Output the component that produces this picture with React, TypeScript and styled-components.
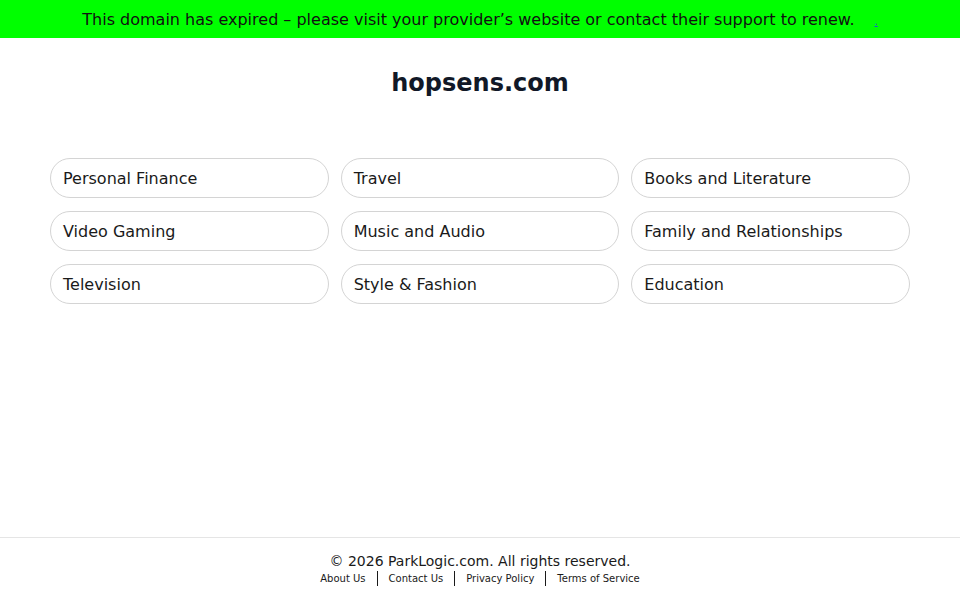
import React from "react";
import { createGlobalStyle, styled } from "styled-components";

const topics = [
  "Personal Finance",
  "Travel",
  "Books and Literature",
  "Video Gaming",
  "Music and Audio",
  "Family and Relationships",
  "Television",
  "Style & Fashion",
  "Education",
];

const footerLinks = ["About Us", "Contact Us", "Privacy Policy", "Terms of Service"];

const App: React.FC = () => {
  return (
    <>
      <GlobalStyle />
      <StyledPage>
        <StyledBanner>
          This domain has expired – please visit your provider’s website or contact their support to renew.
          <StyledBannerLink href="#">.</StyledBannerLink>
        </StyledBanner>
        <StyledMain>
          <StyledTitle>hopsens.com</StyledTitle>
          <StyledGrid>
            {topics.map((topic) => (
              <StyledTopic key={topic} href="#">
                {topic}
              </StyledTopic>
            ))}
          </StyledGrid>
        </StyledMain>
        <StyledFooter>
          <StyledCopyright>© 2026 ParkLogic.com. All rights reserved.</StyledCopyright>
          <StyledFooterLinks>
            {footerLinks.map((link, i) => (
              <React.Fragment key={link}>
                {i > 0 && <StyledDivider />}
                <StyledFooterLink href="#">{link}</StyledFooterLink>
              </React.Fragment>
            ))}
          </StyledFooterLinks>
        </StyledFooter>
      </StyledPage>
    </>
  );
};

const GlobalStyle = createGlobalStyle`
  * { box-sizing: border-box; }
  body {
    margin: 0;
    font-family: "DejaVu Sans", sans-serif;
    background: #fff;
    color: #111;
  }
`;

const StyledPage = styled.div`
  min-height: 100vh;
  display: flex;
  flex-direction: column;
`;

const StyledBanner = styled.div`
  height: 38px;
  background: #00ff00;
  display: flex;
  align-items: center;
  justify-content: center;
  font-size: 16px;
  color: #111;
`;

const StyledBannerLink = styled.a`
  margin-left: 20px;
  font-size: 10px;
  color: #1a56db;
  text-decoration: underline;
  align-self: center;
  padding-top: 4px;
`;

const StyledMain = styled.main`
  flex: 1;
  padding: 30px 50px 0;
`;

const StyledTitle = styled.h1`
  margin: 0;
  text-align: center;
  font-size: 24px;
  font-weight: bold;
  color: #111827;
  line-height: 30px;
`;

const StyledGrid = styled.div`
  display: grid;
  grid-template-columns: repeat(3, 1fr);
  column-gap: 12px;
  row-gap: 13px;
  margin-top: 60px;
`;

const StyledTopic = styled.a`
  display: flex;
  align-items: center;
  height: 40px;
  padding: 0 12px;
  border: 1px solid #d4d4d4;
  border-radius: 20px;
  font-size: 16px;
  color: #1a1a1a;
  text-decoration: none;
`;

const StyledFooter = styled.footer`
  border-top: 1px solid #e5e5e5;
  padding: 15px 0 14px;
  text-align: center;
`;

const StyledCopyright = styled.div`
  font-size: 14px;
  color: #1a1a1a;
  line-height: 17px;
`;

const StyledFooterLinks = styled.div`
  display: flex;
  justify-content: center;
  align-items: center;
  gap: 11px;
  margin-top: 1px;
`;

const StyledFooterLink = styled.a`
  font-size: 10px;
  color: #1a1a1a;
  text-decoration: none;
`;

const StyledDivider = styled.span`
  width: 1px;
  height: 15px;
  background: #1a1a1a;
`;

export default App;
